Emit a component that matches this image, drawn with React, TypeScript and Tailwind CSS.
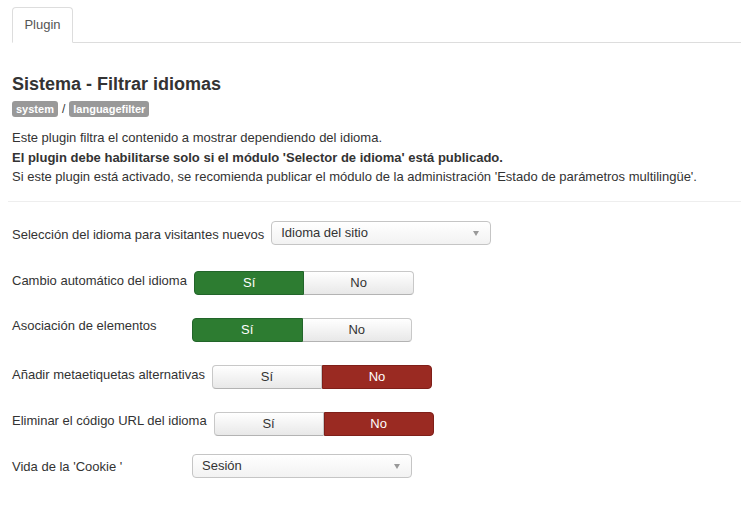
import React from "react";

const font = { fontFamily: '"Liberation Sans", Arial, Helvetica, sans-serif' };

function Toggle({ yes }: { yes: boolean }) {
  const inactive =
    "bg-gradient-to-b from-white to-[#e8e8e8] border border-[#c8c8c8] border-b-[#b3b3b3] text-[#333]";
  return (
    <div className="flex h-[24px] w-[220px] text-[13px]">
      <div
        className={`flex-1 flex items-center justify-center rounded-l-[4px] ${
          yes ? "bg-[#2d7c31] border border-[#22652a] text-white" : inactive
        }`}
      >
        Sí
      </div>
      <div
        className={`flex-1 flex items-center justify-center rounded-r-[4px] ${
          yes ? inactive + " border-l-0" : "bg-[#9a2a22] border border-[#7f1f19] text-white"
        }`}
      >
        No
      </div>
    </div>
  );
}

function Select({ value }: { value: string }) {
  return (
    <div className="relative flex h-[24px] w-[220px] items-center rounded-[4px] border border-[#c5c5c5] bg-gradient-to-b from-white to-[#f2f2f2] pl-[9px] text-[13px] text-[#333] shadow-[inset_0_1px_0_rgba(255,255,255,0.8)]">
      {value}
      <span className="absolute right-[11px] top-[9px] h-0 w-0 border-l-[3.5px] border-r-[3.5px] border-t-[5px] border-l-transparent border-r-transparent border-t-[#999]" />
    </div>
  );
}

function Row({
  label,
  labelShift,
  rowClass,
  children,
}: {
  label: string;
  labelShift: string;
  rowClass: string;
  children: React.ReactNode;
}) {
  return (
    <div className={`flex items-start ${rowClass}`}>
      <div className={`min-w-[180px] pr-[7px] leading-[19.5px] ${labelShift}`}>{label}</div>
      {children}
    </div>
  );
}

export default function App() {
  return (
    <div className="min-h-[530px] w-[741px] bg-white text-[13px] text-[#333]" style={font}>
      <div className="pl-[12px] pt-[7px]">
        <div className="flex border-b border-[#dddddd]">
          <div className="-mb-px flex h-[36px] w-[61px] items-center justify-center rounded-t-[4px] border border-[#dddddd] border-b-white bg-white text-[13px] text-[#555]">
            Plugin
          </div>
        </div>
      </div>
      <div className="pl-[12px]">
        <h2 className="mt-[31px] text-[18px] font-bold leading-[20px] text-[#333]">
          Sistema - Filtrar idiomas
        </h2>
        <div className="mt-[6px] flex items-center text-[11px]">
          <span className="flex h-[16px] items-center rounded-[3px] bg-[#999] px-[4px] font-bold text-white">
            system
          </span>
          <span className="mx-[4px] text-[12px] text-[#333]">/</span>
          <span className="flex h-[16px] items-center rounded-[3px] bg-[#999] px-[4px] font-bold text-white">
            languagefilter
          </span>
        </div>
        <div className="mt-[10px] leading-[19.5px]">
          <p>Este plugin filtra el contenido a mostrar dependiendo del idioma.</p>
          <p className="font-bold">
            El plugin debe habilitarse solo si el módulo 'Selector de idioma' está publicado.
          </p>
          <p>
            Si este plugin está activado, se recomienda publicar el módulo de la administración
            'Estado de parámetros multilingüe'.
          </p>
        </div>
      </div>
      <div className="ml-[8px] mt-[14px] border-t border-[#eeeeee]" />
      <div className="pl-[12px]">
        <Row label="Selección del idioma para visitantes nuevos" labelShift="mt-[4px]" rowClass="mt-[19px]">
          <Select value="Idioma del sitio" />
        </Row>
        <Row label="Cambio automático del idioma" labelShift="mt-0" rowClass="mt-[26px]">
          <Toggle yes={true} />
        </Row>
        <Row label="Asociación de elementos" labelShift="-mt-[2px]" rowClass="mt-[23px]">
          <Toggle yes={true} />
        </Row>
        <Row label="Añadir metaetiquetas alternativas" labelShift="mt-0" rowClass="mt-[23px]">
          <Toggle yes={false} />
        </Row>
        <Row label="Eliminar el código URL del idioma" labelShift="-mt-[1px]" rowClass="mt-[23px]">
          <Toggle yes={false} />
        </Row>
        <Row label="Vida de la 'Cookie '" labelShift="mt-[3px]" rowClass="mt-[18px]">
          <Select value="Sesión" />
        </Row>
      </div>
    </div>
  );
}
